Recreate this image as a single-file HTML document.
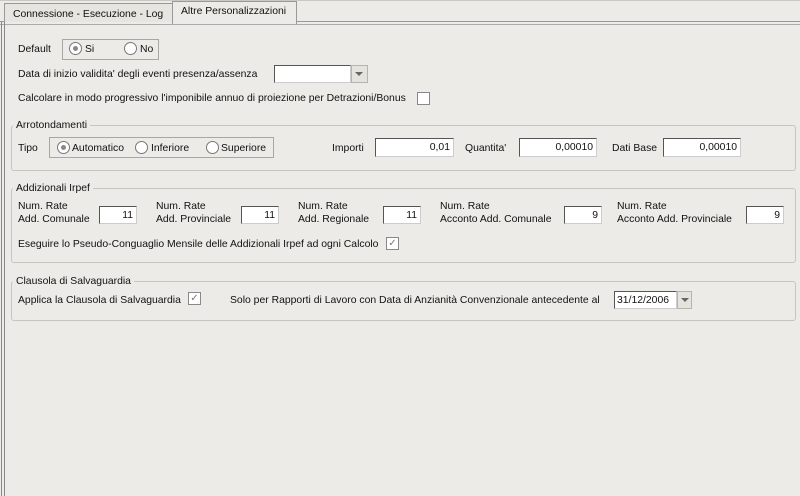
<!DOCTYPE html>
<html><head><style>
body{margin:0;width:800px;height:496px;background:#ecebe7;font-family:"Liberation Sans",sans-serif;font-size:10.4px;color:#111;position:relative;overflow:hidden}
div,span{position:absolute}
.t{white-space:nowrap;line-height:13px}
.box{border:1px solid #c6c5be;border-radius:3px}
.grp{border:1px solid #a8a7a0;background:#ecebe7}
.in{background:#fff;border:1px solid #555;border-color:#555 #ccc #ccc #555;text-align:right;line-height:17px;padding-right:3px;box-sizing:border-box}
.rad{width:11px;height:11px;border:1px solid #777;border-radius:50%;background:#fff}
.rad.on:after{content:"";position:absolute;left:3px;top:3px;width:5px;height:5px;border-radius:50%;background:#888}
.cb{width:11px;height:11px;border:1px solid #888;background:#fff}
.btn{background:#e4e3dd;border:1px solid #b5b4ae}
.btn:after{content:"";position:absolute;left:3px;top:6px;border-left:4px solid transparent;border-right:4px solid transparent;border-top:4px solid #666}
.leg{background:#ecebe7;padding:0 3px}
</style></head><body>
<div style="left:0;top:21px;width:800px;height:2px;border-top:1px solid #999;border-bottom:1px solid #aaa"></div>
<div style="left:0;top:0;width:800px;height:1px;background:#c9c8c2"></div>
<div style="left:1px;top:22px;width:1px;height:474px;background:#888"></div>
<div style="left:4px;top:22px;width:1px;height:474px;background:#888"></div>
<div style="left:4px;top:3px;width:167px;height:18px;border:1px solid #999;border-bottom:none;background:#e6e5e0"></div>
<div class="t" style="left:13px;top:8px">Connessione - Esecuzione - Log</div>
<div style="left:172px;top:1px;width:123px;height:22px;border:1px solid #999;border-bottom:none;background:#ecebe7"></div>
<div class="t" style="left:181px;top:5px">Altre Personalizzazioni</div>

<div class="t" style="left:18px;top:43px">Default</div>
<div class="grp" style="left:62px;top:39px;width:95px;height:19px"></div>
<div class="rad on" style="left:69px;top:42px"></div><div class="t" style="left:85px;top:43px">Si</div>
<div class="rad" style="left:124px;top:42px"></div><div class="t" style="left:140px;top:43px">No</div>

<div class="t" style="left:18px;top:68px">Data di inizio validita' degli eventi presenza/assenza</div>
<div class="in" style="left:274px;top:65px;width:77px;height:18px"></div>
<div class="btn" style="left:351px;top:65px;width:15px;height:16px"></div>

<div class="t" style="left:18px;top:92px">Calcolare in modo progressivo l'imponibile annuo di proiezione per Detrazioni/Bonus</div>
<div class="cb" style="left:417px;top:92px"></div>

<div class="box" style="left:11px;top:125px;width:783px;height:44px"></div>
<div class="t leg" style="left:13px;top:119px">Arrotondamenti</div>
<div class="t" style="left:18px;top:142px">Tipo</div>
<div class="grp" style="left:49px;top:137px;width:223px;height:19px"></div>
<div class="rad on" style="left:57px;top:141px"></div><div class="t" style="left:72px;top:142px">Automatico</div>
<div class="rad" style="left:135px;top:141px"></div><div class="t" style="left:151px;top:142px">Inferiore</div>
<div class="rad" style="left:206px;top:141px"></div><div class="t" style="left:221px;top:142px">Superiore</div>
<div class="t" style="left:332px;top:142px">Importi</div>
<div class="in" style="left:375px;top:138px;width:79px;height:19px">0,01</div>
<div class="t" style="left:465px;top:142px">Quantita'</div>
<div class="in" style="left:519px;top:138px;width:78px;height:19px">0,00010</div>
<div class="t" style="left:612px;top:142px">Dati Base</div>
<div class="in" style="left:663px;top:138px;width:78px;height:19px">0,00010</div>

<div class="box" style="left:11px;top:188px;width:783px;height:73px"></div>
<div class="t leg" style="left:13px;top:182px">Addizionali Irpef</div>
<div class="t" style="left:18px;top:200px">Num. Rate<br>Add. Comunale</div>
<div class="in" style="left:99px;top:206px;width:38px;height:18px">11</div>
<div class="t" style="left:156px;top:200px">Num. Rate<br>Add. Provinciale</div>
<div class="in" style="left:241px;top:206px;width:38px;height:18px">11</div>
<div class="t" style="left:298px;top:200px">Num. Rate<br>Add. Regionale</div>
<div class="in" style="left:383px;top:206px;width:38px;height:18px">11</div>
<div class="t" style="left:440px;top:200px">Num. Rate<br>Acconto Add. Comunale</div>
<div class="in" style="left:564px;top:206px;width:38px;height:18px">9</div>
<div class="t" style="left:617px;top:200px">Num. Rate<br>Acconto Add. Provinciale</div>
<div class="in" style="left:746px;top:206px;width:38px;height:18px">9</div>
<div class="t" style="left:18px;top:238px">Eseguire lo Pseudo-Conguaglio Mensile delle Addizionali Irpef ad ogni Calcolo</div>
<div class="cb" style="left:386px;top:237px;font-size:10px;line-height:11px;text-align:center;color:#777">✓</div>

<div class="box" style="left:11px;top:281px;width:783px;height:38px"></div>
<div class="t leg" style="left:13px;top:275px">Clausola di Salvaguardia</div>
<div class="t" style="left:18px;top:294px">Applica la Clausola di Salvaguardia</div>
<div class="cb" style="left:188px;top:292px;font-size:10px;line-height:11px;text-align:center;color:#777">✓</div>
<div class="t" style="left:230px;top:294px">Solo per Rapporti di Lavoro con Data di Anzianità Convenzionale antecedente al</div>
<div class="in" style="left:614px;top:291px;width:63px;height:18px;text-align:left;padding-left:2px">31/12/2006</div>
<div class="btn" style="left:677px;top:291px;width:13px;height:16px"></div>
</body></html>
